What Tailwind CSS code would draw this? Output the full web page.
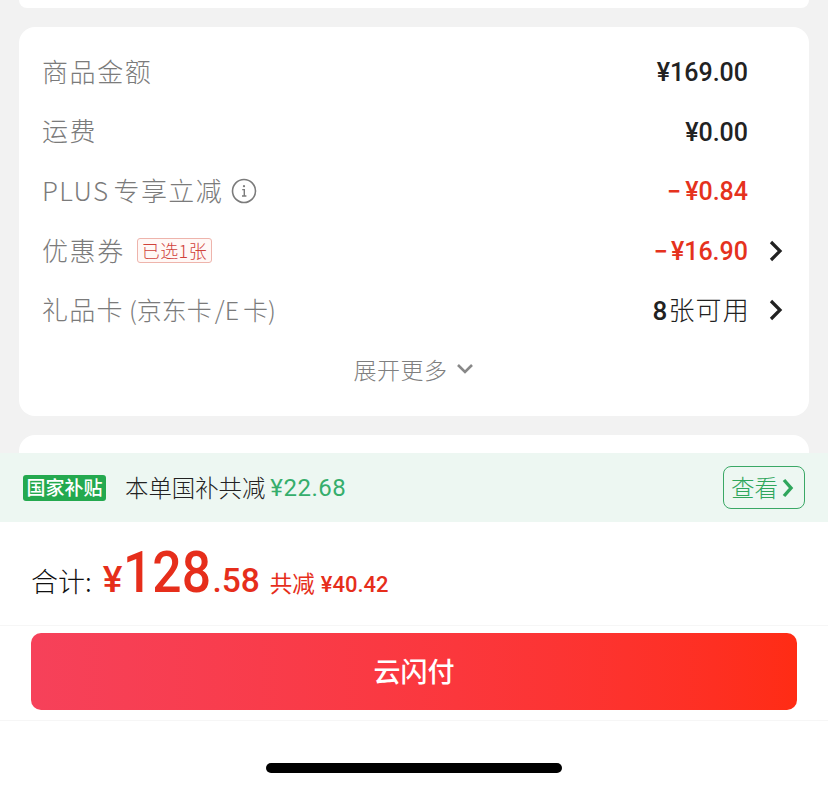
<!DOCTYPE html>
<html lang="zh-CN">
  <head>
    <meta charset="UTF-8" />
    <title>订单结算</title>
    <script src="https://cdn.jsdelivr.net/npm/@tailwindcss/browser@4"></script>
  </head>

  <body class="bg-white font-['Noto_Sans_CJK_SC',sans-serif]">
    <div class="w-[828px] h-[788px] overflow-hidden flex flex-col">
      <!-- 上方滚动区 -->
      <div class="h-[453px] shrink-0 overflow-hidden bg-[#f2f2f2] px-[19px]">
        <div class="h-2 bg-white rounded-b-2xl"></div>

        <div class="mt-[19px] h-[389px] bg-white rounded-2xl pt-[15px] pl-[23px] pr-[25px]">
          <div class="h-[59.6px] flex items-center justify-between">
            <span class="pb-[3px] text-[26px] font-light text-[#7b7b7b] tracking-[1.6px]">商品金额</span>
            <span class="pt-[2px] mr-[36px] text-[25px] font-medium text-[#222] font-['Roboto',sans-serif]">¥169.00</span>
          </div>
          <div class="h-[59.6px] flex items-center justify-between">
            <span class="pb-[3px] text-[26px] font-light text-[#7b7b7b] tracking-[1.6px]">运费</span>
            <span class="pt-[2px] mr-[36px] text-[25px] font-medium text-[#222] font-['Roboto',sans-serif]">¥0.00</span>
          </div>
          <div class="h-[59.6px] flex items-center justify-between">
            <div class="flex items-center">
              <span class="pb-[2px] text-[26px] font-light text-[#7b7b7b] tracking-[1.4px]">PLUS<span class="ml-[4px]">专享立减</span></span>
              <svg class="ml-2 w-[26px] h-[26px]" viewBox="0 0 26 26" fill="none" stroke="#7b7b7b">
                <circle cx="13" cy="13" r="11.5" stroke-width="1.6" />
                <path d="M11.2 11.6h2.1v6.2M11 18h4.4" stroke-width="1.4" />
                <circle cx="13" cy="8.2" r="1.1" fill="#7b7b7b" stroke="none" />
              </svg>
            </div>
            <span class="pt-[2px] mr-[36px] text-[25px] font-medium text-[#e5321d] font-['Roboto',sans-serif]"><span class="mr-[4px]">−</span>¥0.84</span>
          </div>
          <div class="h-[59.6px] flex items-center justify-between">
            <div class="flex items-center">
              <span class="pb-[3px] text-[26px] font-light text-[#7b7b7b] tracking-[1.6px]">优惠券</span>
              <span class="ml-3 h-[25px] px-1 flex items-center text-[18px] tracking-[0.4px] text-[#d0413a] bg-[#fff8f6] border border-[#eeb4ac] rounded-[3px] font-light">已选1张</span>
            </div>
            <div class="flex items-center">
              <span class="pt-[2px] text-[25px] font-medium text-[#e5321d] font-['Roboto',sans-serif]"><span class="mr-[3px]">−</span>¥16.90</span>
              <svg class="ml-5 w-4 h-6" viewBox="0 0 16 24" fill="none" stroke="#222" stroke-width="3.2">
                <path d="M3 3l9 9-9 9" />
              </svg>
            </div>
          </div>
          <div class="h-[59.6px] flex items-center justify-between">
            <span class="pb-[3px] text-[26px] font-light text-[#7b7b7b] tracking-[1.3px]">礼品卡<span class="ml-[5px] text-[25px] tracking-normal">(京东卡</span><span class="ml-[3px] text-[25px] tracking-normal">/E</span><span class="ml-[4px] text-[25px] tracking-normal">卡)</span></span>
            <div class="flex items-center">
              <span class="text-[26px] text-[#222] font-light tracking-[1.2px]"><span class="font-medium font-['Roboto',sans-serif]">8</span>张可用</span>
              <svg class="ml-[18px] w-4 h-6" viewBox="0 0 16 24" fill="none" stroke="#222" stroke-width="3.2">
                <path d="M3 3l9 9-9 9" />
              </svg>
            </div>
          </div>
          <div class="h-[59px] flex items-center justify-center pl-[1px]">
            <span class="text-[23px] font-light text-[#7f7f7f] tracking-[0.5px]">展开更多</span>
            <svg class="ml-2 w-[18px] h-3" viewBox="0 0 18 12" fill="none" stroke="#888" stroke-width="2.6">
              <path d="M2 2l7 7 7-7" />
            </svg>
          </div>
        </div>

        <div class="mt-[19px] h-10 bg-white rounded-t-2xl"></div>
      </div>

      <!-- 国家补贴 -->
      <div class="h-[69px] shrink-0 bg-[#edf7f2] pl-[23px] pr-[23px] flex items-center">
        <span class="w-[83px] h-[26px] bg-[#24a94f] rounded-[3px] text-white text-[19px] font-medium flex items-center justify-center">国家补贴</span>
        <span class="ml-[19px] text-[23.4px] font-light text-[#222]">本单国补共减</span>
        <span class="ml-[5px] text-[24px] text-[#35ae6c] font-['Roboto',sans-serif] tracking-[0.5px]">¥22.68</span>
        <div class="ml-auto w-[82px] h-[43px] border-[1.5px] border-[#3aa866] rounded-lg flex items-center pl-[7px]">
          <span class="text-[23.5px] font-light text-[#2fa65c]">查看</span>
          <svg class="ml-[4px] w-3 h-5" viewBox="0 0 12 20" fill="none" stroke="#2fa65c" stroke-width="3.4">
            <path d="M2 2l7 8-7 8" />
          </svg>
        </div>
      </div>

      <!-- 合计 -->
      <div class="h-[104px] shrink-0 pl-[31px] border-b border-[#f6f6f6] flex items-baseline pt-[17px] text-[#e62e1b]">
        <span class="text-[27px] font-light text-[#111]">合计:</span>
        <span class="ml-[11px] text-[37px] font-medium font-['Roboto',sans-serif]">¥</span>
        <span class="ml-[1px] w-[89px] origin-left scale-x-[.89] text-[58px] leading-[66px] font-medium font-['Roboto',sans-serif]">128</span>
        <span class="text-[33.5px] font-medium font-['Roboto',sans-serif]">.58</span>
        <span class="ml-[10px] text-[22.5px] font-normal">共减</span>
        <span class="ml-[6px] text-[22px] font-medium font-['Roboto',sans-serif]">¥40.42</span>
      </div>

      <!-- 支付按钮 -->
      <div class="h-[95px] shrink-0 px-[31px] pt-[7px] border-b border-[#f6f6f6]">
        <button class="w-full h-[77px] rounded-[10px] bg-gradient-to-r from-[#f6415a] to-[#ff2c14] text-white text-[27px] font-medium">云闪付</button>
      </div>

      <div class="flex-1 flex justify-center pt-[42px]">
        <div class="w-[296px] h-[10px] rounded-full bg-black"></div>
      </div>
    </div>
  </body>
</html>
